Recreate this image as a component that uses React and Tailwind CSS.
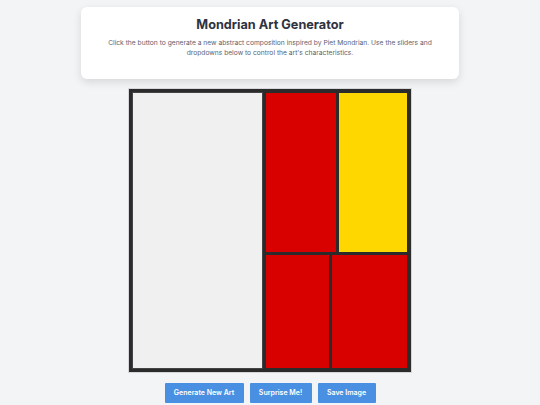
export default function App() {
  return (
    <div
      className="min-h-[405px] w-full bg-[#f3f4f6] flex flex-col items-center pt-[7px]"
      style={{ fontFamily: 'Inter, "Noto Sans", sans-serif' }}
    >
      <div className="w-[378px] h-[72px] bg-white rounded-[6px] shadow-[0_3px_8px_rgba(0,0,0,0.12)] flex flex-col items-center pt-[10px]">
        <h1 className="text-[12.7px] leading-[16px] font-bold text-[#2d3340]">Mondrian Art Generator</h1>
        <p className="mt-[5px] w-[340px] text-center text-[6.7px] leading-[10px] text-[#5b6270]">
          Click the button to generate a new abstract composition inspired by Piet Mondrian. Use the sliders and dropdowns below to control the art's characteristics.
        </p>
      </div>

      <div className="mt-[10px] w-[282px] h-[283px] bg-[#2b2b2b] p-[4px] flex gap-[4px] shadow-[0_0_0_1px_#d6d7da]">
        <div className="w-[129px] h-full bg-[#f0f0f0] outline outline-1 outline-[#444]"></div>
        <div className="flex-1 flex flex-col gap-[3px]">
          <div className="h-[159px] flex gap-[3px]">
            <div className="w-[70px] h-full bg-[#d90000]"></div>
            <div className="flex-1 h-full bg-[#ffd700]"></div>
          </div>
          <div className="flex-1 flex gap-[3px]">
            <div className="w-[63px] h-full bg-[#d90000]"></div>
            <div className="flex-1 h-full bg-[#d90000]"></div>
          </div>
        </div>
      </div>

      <div className="mt-[11px] flex gap-[6px]">
        <button className="w-[79px] h-[20px] bg-[#4a90e2] text-white text-[7px] font-semibold rounded-[1px]">Generate New Art</button>
        <button className="w-[62px] h-[20px] bg-[#4a90e2] text-white text-[7px] font-semibold rounded-[1px]">Surprise Me!</button>
        <button className="w-[58px] h-[20px] bg-[#4a90e2] text-white text-[7px] font-semibold rounded-[1px]">Save Image</button>
      </div>
    </div>
  );
}
